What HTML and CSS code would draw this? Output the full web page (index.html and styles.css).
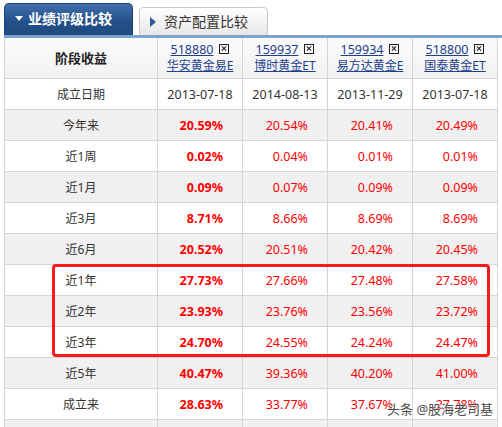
FILE: index.html
```html
<!DOCTYPE html>
<html lang="zh">
<head>
<meta charset="utf-8">
<link rel="stylesheet" href="styles.css">
</head>
<body>
<div class="page">
  <div class="tabs">
    <div class="tab tab-active"><span class="tri-down"></span>业绩评级比较</div>
    <div class="tab tab-idle"><span class="tri-right"></span>资产配置比较</div>
  </div>
  <table class="cmp">
    <colgroup>
      <col class="c-label"><col class="c-fund"><col class="c-fund"><col class="c-fund"><col class="c-fund">
    </colgroup>
    <thead>
      <tr class="head">
        <th class="label-head">阶段收益</th>
        <th><div class="code"><a>518880</a><span class="xbox"></span></div><div class="name"><a>华安黄金易E</a></div></th>
        <th><div class="code"><a>159937</a><span class="xbox"></span></div><div class="name"><a>博时黄金ET</a></div></th>
        <th><div class="code"><a>159934</a><span class="xbox"></span></div><div class="name"><a>易方达黄金E</a></div></th>
        <th><div class="code"><a>518800</a><span class="xbox"></span></div><div class="name"><a>国泰黄金ET</a></div></th>
      </tr>
    </thead>
    <tbody>
      <tr><td class="lbl">成立日期</td><td class="date">2013-07-18</td><td class="date">2014-08-13</td><td class="date">2013-11-29</td><td class="date">2013-07-18</td></tr>
      <tr class="alt"><td class="lbl">今年来</td><td class="pct main">20.59%</td><td class="pct">20.54%</td><td class="pct">20.41%</td><td class="pct">20.49%</td></tr>
      <tr><td class="lbl">近1周</td><td class="pct main">0.02%</td><td class="pct">0.04%</td><td class="pct">0.01%</td><td class="pct">0.01%</td></tr>
      <tr class="alt"><td class="lbl">近1月</td><td class="pct main">0.09%</td><td class="pct">0.07%</td><td class="pct">0.09%</td><td class="pct">0.09%</td></tr>
      <tr><td class="lbl">近3月</td><td class="pct main">8.71%</td><td class="pct">8.66%</td><td class="pct">8.69%</td><td class="pct">8.69%</td></tr>
      <tr class="alt"><td class="lbl">近6月</td><td class="pct main">20.52%</td><td class="pct">20.51%</td><td class="pct">20.42%</td><td class="pct">20.45%</td></tr>
      <tr><td class="lbl">近1年</td><td class="pct main">27.73%</td><td class="pct">27.66%</td><td class="pct">27.48%</td><td class="pct">27.58%</td></tr>
      <tr class="alt"><td class="lbl">近2年</td><td class="pct main">23.93%</td><td class="pct">23.76%</td><td class="pct">23.56%</td><td class="pct">23.72%</td></tr>
      <tr><td class="lbl">近3年</td><td class="pct main">24.70%</td><td class="pct">24.55%</td><td class="pct">24.24%</td><td class="pct">24.47%</td></tr>
      <tr class="alt"><td class="lbl">近5年</td><td class="pct main">40.47%</td><td class="pct">39.36%</td><td class="pct">40.20%</td><td class="pct">41.00%</td></tr>
      <tr><td class="lbl">成立来</td><td class="pct main">28.63%</td><td class="pct">33.77%</td><td class="pct">37.67%</td><td class="pct">27.78%</td></tr>
      <tr class="alt"><td class="lbl"></td><td></td><td></td><td></td><td></td></tr>
    </tbody>
  </table>
  <div class="highlight"></div>
  <div class="watermark">头条 @股海老司基</div>
</div>
</body>
</html>
```
FILE: styles.css
```css
html, body {
  margin: 0;
  padding: 0;
  background: #fff;
  overflow: hidden;
}
body {
  font-family: "Noto Sans", "Noto Sans CJK SC", sans-serif;
  color: #333;
}
.page {
  position: relative;
  width: 502px;
  height: 427px;
  overflow: hidden;
}
.tabs {
  display: flex;
  align-items: flex-end;
  gap: 6px;
  height: 35px;
  margin-left: 4px;
  border-bottom: 3px solid #7aa3d1;
}
.tab {
  box-sizing: border-box;
  width: 129px;
  display: flex;
  align-items: center;
  font-size: 14px;
  line-height: 16px;
  border-radius: 5px 5px 0 0;
}
.tab-active {
  height: 32px;
  padding-left: 10px;
  padding-bottom: 2px;
  color: #fff;
  font-weight: bold;
  background: linear-gradient(#3f6fab, #234f88 60%, #1f4a80);
  border: 1px solid #1e4478;
  border-bottom: none;
}
.tab-idle {
  height: 28px;
  padding-left: 10px;
  color: #333;
  background: linear-gradient(#ffffff, #f3f3f3 50%, #e6e6e6);
  border: 1px solid #c8c8c8;
  border-bottom: none;
}
.tri-down {
  width: 0;
  height: 0;
  border-left: 4.5px solid transparent;
  border-right: 4.5px solid transparent;
  border-top: 5px solid #fff;
  margin-right: 5px;
}
.tri-right {
  width: 0;
  height: 0;
  border-top: 5px solid transparent;
  border-bottom: 5px solid transparent;
  border-left: 6px solid #2b5b94;
  margin-right: 8px;
}
.cmp {
  margin-left: 4px;
  width: 493px;
  border-collapse: collapse;
  table-layout: fixed;
  font-size: 12.5px;
}
.c-label { width: 153px; }
.c-fund { width: 85px; }
.cmp th, .cmp td {
  border: 1px solid #d4d4d4;
  padding: 0;
  height: 30px;
  text-align: center;
  white-space: nowrap;
  overflow: hidden;
}
.head th {
  height: 40px;
  background: linear-gradient(#fbfbfb, #f1f1f1);
  font-weight: normal;
  font-size: 12px;
  line-height: 16px;
  border-top: none;
}
.head th.label-head {
  font-weight: bold;
  font-size: 13px;
  color: #222;
}
.head a {
  color: #1d3f8f;
  text-decoration: underline;
}
.code {
  display: flex;
  justify-content: center;
  align-items: center;
  gap: 6px;
  font-size: 12.5px;
}
.name {
  overflow: hidden;
}
.xbox {
  position: relative;
  box-sizing: border-box;
  width: 10px;
  height: 10px;
  border: 1px solid #222;
  margin-top: -3px;
}
.xbox::before, .xbox::after {
  content: "";
  position: absolute;
  left: 1px;
  top: 3.5px;
  width: 6px;
  height: 1px;
  background: #222;
  transform: rotate(45deg);
}
.xbox::after { transform: rotate(-45deg); }
.alt td { background: #f0f0f0; }
.lbl {
  font-size: 12px;
  color: #333;
}
.date { color: #333; }
.pct {
  color: #ff0000;
  text-align: right !important;
  padding-right: 19px !important;
}
.pct.main { font-weight: bold; }
.highlight {
  position: absolute;
  left: 52px;
  top: 264px;
  width: 438px;
  height: 93px;
  box-sizing: border-box;
  border: 3px solid #f51b1b;
  border-radius: 4px;
  pointer-events: none;
}
.watermark {
  position: absolute;
  left: 387px;
  top: 400px;
  font-size: 13px;
  line-height: 18px;
  white-space: nowrap;
  color: #4a4a4a;
  text-shadow: 0 0 2px #fff, 0 0 2px #fff;
}
```
